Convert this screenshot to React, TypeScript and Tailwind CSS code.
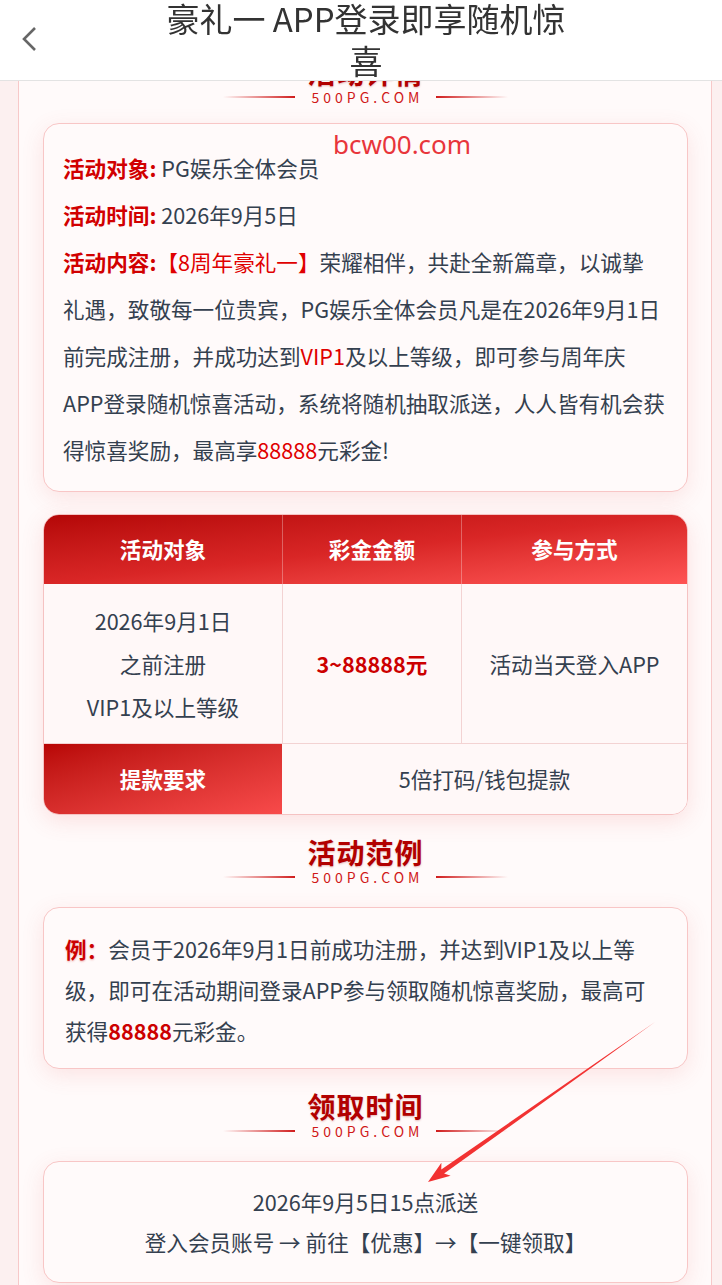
import React from "react";

const FONT = { fontFamily: '"Noto Sans CJK SC", "Noto Sans", sans-serif' };

const CARD =
  "rounded-2xl border border-[#f8c6c6] bg-[#fffafa] shadow-[0_6px_22px_rgba(226,80,80,0.13)]";

function SectionHead({ title, className = "" }: { title: string; className?: string }) {
  return (
    <div className={`flex flex-col items-center ${className}`}>
      <h2 className="flex h-[36px] items-center text-[28px] font-bold leading-[30px] tracking-[1px] text-[#b20000] [text-shadow:0_1px_2px_rgba(150,0,0,0.25)]">
        {title}
      </h2>
      <div className="flex h-[14px] items-center gap-[13px]">
        <span className="h-[2px] w-[72px] bg-gradient-to-r from-transparent to-[#d01c1c]" />
        <span className="pl-[4px] text-[14px] leading-[14px] tracking-[4px] text-[#d01818]">500PG.COM</span>
        <span className="h-[2px] w-[72px] bg-gradient-to-r from-[#d01c1c] to-transparent" />
      </div>
    </div>
  );
}

function Header() {
  return (
    <header className="fixed inset-x-0 top-0 z-20 h-[81px] border-b border-[#e3e3e3] bg-white">
      <svg className="absolute left-[20px] top-[25px]" width="20" height="28" viewBox="0 0 20 28">
        <polyline points="15,3 4,14 15,25" fill="none" stroke="#666" strokeWidth="2.6" />
      </svg>
      <div className="-mt-[3px] flex justify-center pl-[10px]">
        <h1 className="w-[416px] text-center text-[33px] leading-[42px] text-[#333]">
          豪礼一 APP登录即享随机惊喜
        </h1>
      </div>
    </header>
  );
}

function PrizeTable() {
  const body = "flex items-center justify-center bg-[#fff8f8] text-center text-[#34404f]";
  return (
    <div className="mt-[22px] overflow-hidden rounded-2xl border border-[#f5c2c2] shadow-[0_6px_22px_rgba(226,80,80,0.15)]">
      <div className="grid grid-cols-[238px_179px_1fr] bg-gradient-to-br from-[#b40606] via-[#d92626] to-[#ff5454]">
        {["活动对象", "彩金金额", "参与方式"].map((h, i) => (
          <div
            key={h}
            className={`flex h-[69px] items-center justify-center font-bold text-white ${
              i > 0 ? "border-l border-white/30" : ""
            }`}
          >
            {h}
          </div>
        ))}
      </div>
      <div className="grid h-[159px] grid-cols-[238px_179px_1fr] leading-[43px]">
        <div className={body}>
          <div>
            2026年9月1日
            <br />
            之前注册
            <br />
            VIP1及以上等级
          </div>
        </div>
        <div className={`${body} border-l border-[#f3d3d3] font-bold text-[#cc0000]`}>3~88888元</div>
        <div className={`${body} border-l border-[#f3d3d3]`}>活动当天登入APP</div>
      </div>
      <div className="grid h-[71px] grid-cols-[238px_1fr] border-t border-[#f3d3d3]">
        <div className="flex items-center justify-center bg-gradient-to-br from-[#b80404] to-[#f84a4a] font-bold text-white">
          提款要求
        </div>
        <div className="flex items-center justify-center bg-[#fff8f8] text-[#34404f]">5倍打码/钱包提款</div>
      </div>
    </div>
  );
}

export default function App() {
  return (
    <div className="relative min-h-[1285px] bg-[#fcf0f0] text-[21.6px]" style={FONT}>
      <Header />
      <div className="ml-[18px] w-[694px] border-x border-[#f7c9c9] bg-[#fffafa] pb-[40px] pl-6 pr-[23px] pt-[54px]">
        <SectionHead title="活动详情" />

        <div className={`${CARD} mt-[19px] pb-[18px] pl-[19px] pr-[6px] pt-[20px] leading-[47px] text-[#34404f]`}>
          <p>
            <b className="text-[#d10000]">活动对象:</b> PG娱乐全体会员
          </p>
          <p>
            <b className="text-[#d10000]">活动时间:</b> 2026年9月5日
          </p>
          <p>
            <b className="text-[#d10000]">活动内容:</b>
            <span className="text-[#e00000]">【8周年豪礼一】</span>荣耀相伴，共赴全新篇章，以诚挚
            <br />
            礼遇，致敬每一位贵宾，PG娱乐全体会员凡是在2026年9月1日
            <br />
            前完成注册，并成功达到<span className="text-[#e00000]">VIP1</span>及以上等级，即可参与周年庆
            <br />
            APP登录随机惊喜活动，系统将随机抽取派送，人人皆有机会获
            <br />
            得惊喜奖励，最高享<span className="text-[#e00000]">88888</span>元彩金!
          </p>
        </div>

        <PrizeTable />

        <SectionHead title="活动范例" className="mt-[19px]" />

        <div className={`${CARD} mt-[23px] pb-[17px] pl-[21px] pr-[8px] pt-[20px] leading-[41px] text-[#34404f]`}>
          <p>
            <b className="text-[#cc0000] [text-shadow:0_1px_2px_rgba(200,0,0,0.3)]">例：</b>会员于2026年9月1日前成功注册，并达到VIP1及以上等
            <br />
            级，即可在活动期间登录APP参与领取随机惊喜奖励，最高可
            <br />
            获得<b className="text-[#cc0000]">88888</b>元彩金。
          </p>
        </div>

        <SectionHead title="领取时间" className="mt-[19px]" />

        <div className={`${CARD} mt-[23px] pb-[20px] pt-[20px] text-center leading-[40px] text-[#34404f]`}>
          <p>2026年9月5日15点派送</p>
          <p>登入会员账号 → 前往【优惠】→【一键领取】</p>
        </div>
      </div>

      <div
        className="absolute left-[333px] top-[131px] text-[26px] leading-[26px] text-[#e8353b]"
        style={{ fontFamily: '"Noto Sans", sans-serif' }}
      >
        bcw00.com
      </div>

      <svg className="pointer-events-none absolute left-0 top-0" width="722" height="1285">
        <polygon
          points="655,1022 444.1,1173.6 450.6,1175.8 428,1182 441.4,1162.8 441.3,1169.6"
          fill="#f23232"
        />
      </svg>
    </div>
  );
}
